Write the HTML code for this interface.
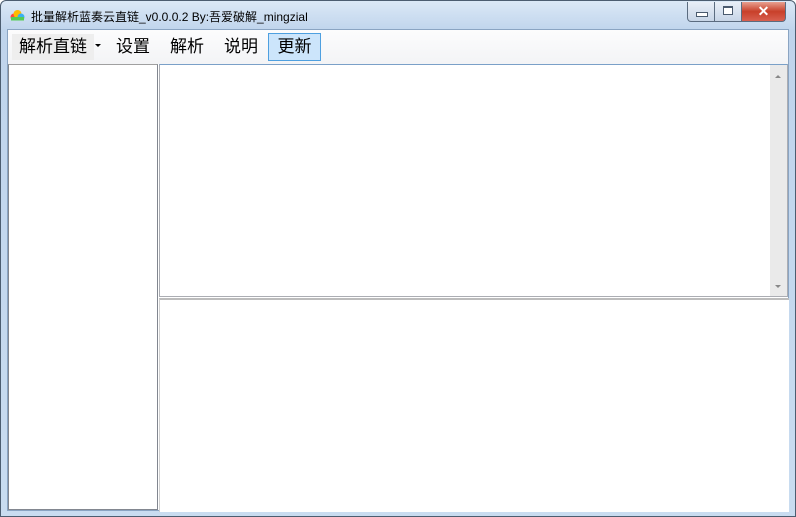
<!DOCTYPE html><html><head><meta charset="utf-8"><style>
body{margin:0;width:796px;height:517px;overflow:hidden;font-family:"Liberation Sans","Noto Sans CJK SC",sans-serif;background:#fff}
.win{position:absolute;left:0;top:0;width:794px;height:515px;border:1px solid #4c5d70;border-radius:6px 6px 0 0;background:linear-gradient(180deg,#dbe8f6 0,#bfd4ec 30px,#c9dcf0 100%)}
.title{position:absolute;left:30px;top:7px;font-size:12px;color:#000}
.client{position:absolute;left:6px;top:28px;width:780px;height:480px;background:#fff;border:1px solid #8aa4c2}
.menu{position:absolute;left:0;top:0;width:780px;height:34px;background:linear-gradient(#fcfcfd,#f3f4f6)}
.mi{position:absolute;top:4px;height:26px;line-height:26px;font-size:17px;color:#000}
.left{position:absolute;left:0;top:34px;width:148px;height:444px;border:1px solid #828790;border-top-color:#a0a0a0;background:#fff}
.rt{position:absolute;left:151px;top:34px;width:627px;height:231px;border:1px solid #abadb3;border-top-color:#7aa0c8;background:#fff}
.sb{position:absolute;right:0;top:0;width:17px;height:100%;background:#eaeaea}
.rb{position:absolute;left:151px;top:268px;width:629px;height:212px;border-top:2px solid #bcbcbc;border-left:1px solid #d0d0d0;background:#fff}
.btn{position:absolute;top:1px;height:19px;border:1px solid #5b6c80;border-top:none}
</style></head><body><div class="win">
<svg style="position:absolute;left:9px;top:8px" width="15" height="12"><circle cx="4" cy="8" r="3.5" fill="#f44"/><circle cx="7.5" cy="5" r="4" fill="#fb0"/><circle cx="11" cy="8" r="3.5" fill="#3ab0f0"/><rect x="1" y="8" width="13" height="3.5" fill="#5c5"/></svg>
<div class="title">批量解析蓝奏云直链_v0.0.0.2 By:吾爱破解_mingzial</div>
<div class="btn" style="left:686px;width:26px;background:linear-gradient(#e9eff7,#c7d5e7);border-radius:0 0 0 4px"><div style="position:absolute;left:8px;top:10px;width:10px;height:3px;background:#fff;border:1px solid #4a5a6e"></div></div>
<div class="btn" style="left:713px;width:26px;background:linear-gradient(#e9eff7,#c7d5e7)"><div style="position:absolute;left:8px;top:4px;width:8px;height:6px;border:1px solid #4a5a6e;border-top-width:2px;background:#fff"></div></div>
<div class="btn" style="left:740px;width:43px;background:linear-gradient(#e8a090,#c8402a 50%,#d86050);border-radius:0 0 4px 0;color:#fff;font-weight:bold;font-size:14px;text-align:center;line-height:18px">✕</div>
<div class="client">
<div class="mi" style="display:none"></div>
<div class="menu">
<div class="mi" style="left:4px;padding:0 7px;background:#eeeeee">解析直链</div>
<div style="position:absolute;left:87px;top:14px;border:3px solid transparent;border-top:3px solid #000;width:0"></div>
<div class="mi" style="left:108px">设置</div>
<div class="mi" style="left:162px">解析</div>
<div class="mi" style="left:216px">说明</div>
<div class="mi" style="left:260px;top:3px;width:51px;text-align:center;background:#cce5fb;border:1px solid #4ea0e0">更新</div>
</div>
<div class="left"></div>
<div class="rt"><div class="sb"><div style="position:absolute;left:5px;top:7px;border:3px solid transparent;border-bottom:3px solid #888;width:0"></div><div style="position:absolute;left:5px;bottom:5px;border:3px solid transparent;border-top:3px solid #888;width:0"></div></div></div>
<div class="rb"></div>
</div></div></body></html>
